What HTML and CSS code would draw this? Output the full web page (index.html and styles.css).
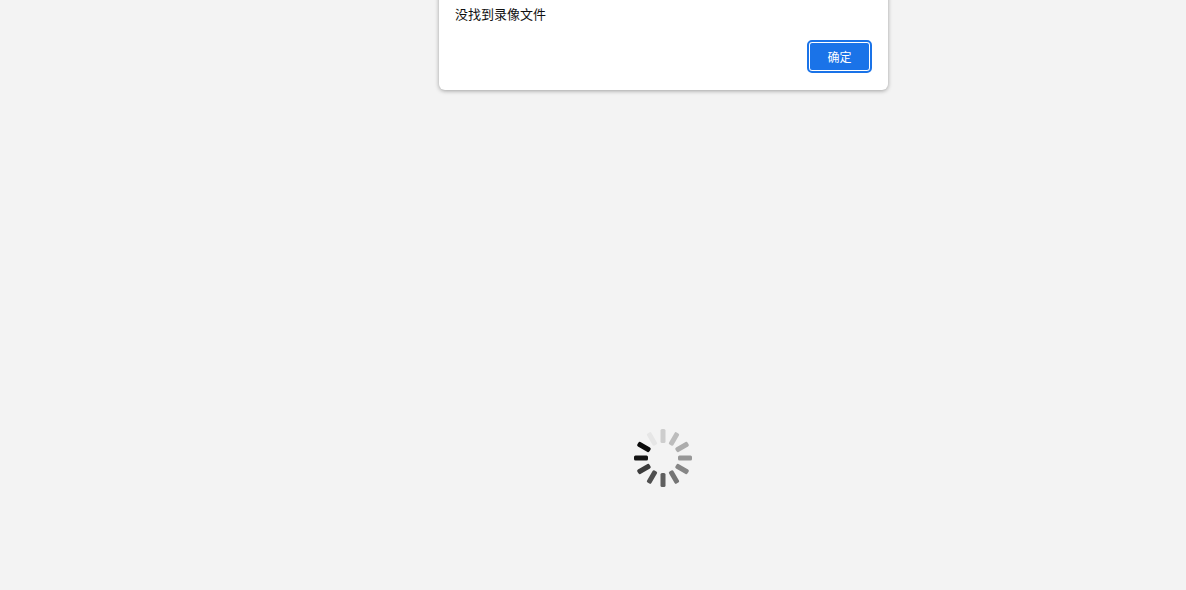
FILE: index.html
```html
<!DOCTYPE html>
<html lang="zh">
<head>
    <meta charset="utf-8">
    <title>录像</title>
    <link rel="stylesheet" href="styles.css">
</head>
<body>
    <div class="dialog">
        <div class="dialog-message">没找到录像文件</div>
        <div class="dialog-buttons">
            <button class="ok-button">确定</button>
        </div>
    </div>

    <svg class="spinner" width="60" height="60" viewBox="-30 -30 60 60">
        <rect x="-2.5" y="-29" width="5" height="14" rx="1.5" fill="#cdcdcd"/>
        <rect x="-2.5" y="-29" width="5" height="14" rx="1.5" fill="#bcbcbc" transform="rotate(30)"/>
        <rect x="-2.5" y="-29" width="5" height="14" rx="1.5" fill="#acacac" transform="rotate(60)"/>
        <rect x="-2.5" y="-29" width="5" height="14" rx="1.5" fill="#979797" transform="rotate(90)"/>
        <rect x="-2.5" y="-29" width="5" height="14" rx="1.5" fill="#868686" transform="rotate(120)"/>
        <rect x="-2.5" y="-29" width="5" height="14" rx="1.5" fill="#747474" transform="rotate(150)"/>
        <rect x="-2.5" y="-29" width="5" height="14" rx="1.5" fill="#5f5f5f" transform="rotate(180)"/>
        <rect x="-2.5" y="-29" width="5" height="14" rx="1.5" fill="#505050" transform="rotate(210)"/>
        <rect x="-2.5" y="-29" width="5" height="14" rx="1.5" fill="#3c3c3c" transform="rotate(240)"/>
        <rect x="-2.5" y="-29" width="5" height="14" rx="1.5" fill="#141414" transform="rotate(270)"/>
        <rect x="-2.5" y="-29" width="5" height="14" rx="1.5" fill="#0a0a0a" transform="rotate(300)"/>
        <rect x="-2.5" y="-29" width="5" height="14" rx="1.5" fill="#e6e6e6" transform="rotate(330)"/>
    </svg>
</body>
</html>
```

FILE: styles.css
```css
html, body {
    height: 100%;
}

body {
    margin: 0;
    background-color: #f3f3f3;
    font-family: "Liberation Sans", "Noto Sans CJK SC", sans-serif;
    overflow: hidden;
}

.dialog {
    position: absolute;
    top: -10px;
    left: 439px;
    width: 449px;
    height: 100px;
    box-sizing: border-box;
    padding: 16px 18px 19px 16px;
    background: #fff;
    border-radius: 6px;
    box-shadow: 0 1px 4px rgba(0, 0, 0, 0.35);
    display: flex;
    flex-direction: column;
    justify-content: space-between;
}

.dialog-message {
    font-size: 13px;
    line-height: 18px;
    color: #111;
}

.dialog-buttons {
    display: flex;
    justify-content: flex-end;
}

.ok-button {
    width: 61px;
    height: 29px;
    box-sizing: border-box;
    padding: 0;
    border: 1px solid #fff;
    border-radius: 3px;
    outline: 2px solid #1a73e8;
    background: #1a73e8;
    color: #fff;
    font-family: inherit;
    font-size: 12px;
}

.spinner {
    position: absolute;
    left: 633px;
    top: 428px;
}
```
